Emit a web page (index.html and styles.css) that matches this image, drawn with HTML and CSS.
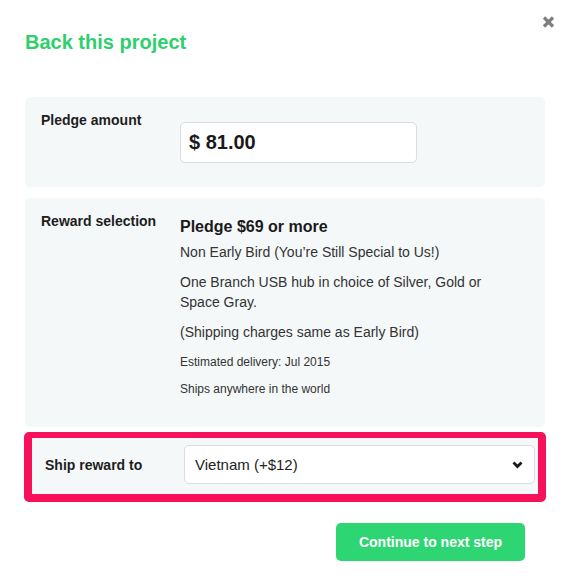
FILE: index.html
```html
<!DOCTYPE html>
<html lang="en">
<head>
<meta charset="utf-8">
<title>Back this project</title>
<link rel="stylesheet" href="styles.css">
</head>
<body>
<div class="modal">
  <button class="close" aria-label="Close">
    <svg width="13" height="12" viewBox="0 0 13 12"><path d="M2 1.5 L11 10.5 M11 1.5 L2 10.5" stroke="#7f7f7f" stroke-width="3.2" fill="none"/></svg>
  </button>
  <h1 class="title">Back this project</h1>

  <section class="panel panel-amount">
    <div class="label">Pledge amount</div>
    <div class="content">
      <div class="amount-input">$ 81.00</div>
    </div>
  </section>

  <section class="panel panel-reward">
    <div class="label">Reward selection</div>
    <div class="content">
      <h3 class="reward-title">Pledge $69 or more</h3>
      <p class="reward-text">Non Early Bird (You’re Still Special to Us!)</p>
      <p class="reward-text">One Branch USB hub in choice of Silver, Gold or Space Gray.</p>
      <p class="reward-text">(Shipping charges same as Early Bird)</p>
      <p class="reward-small">Estimated delivery: Jul 2015</p>
      <p class="reward-small">Ships anywhere in the world</p>
    </div>
  </section>

  <section class="panel panel-ship">
    <div class="label">Ship reward to</div>
    <div class="select">
      <span>Vietnam (+$12)</span>
      <svg width="11" height="8" viewBox="0 0 11 8"><path d="M1.5 1.5 L5.5 5.5 L9.5 1.5" stroke="#1a1a1a" stroke-width="2.8" fill="none"/></svg>
    </div>
  </section>

  <div class="actions">
    <button class="continue">Continue to next step</button>
  </div>
</div>
</body>
</html>
```

FILE: styles.css
```css
html, body {
  margin: 0;
  padding: 0;
  background: #ffffff;
}

body {
  font-family: "Liberation Sans", Arial, sans-serif;
  color: #222;
}

.modal {
  position: relative;
  padding: 30px 24px 0 25px;
}

.close {
  position: absolute;
  top: 16px;
  left: 542px;
  width: 13px;
  height: 12px;
  padding: 0;
  border: 0;
  background: none;
  display: block;
}

.close svg {
  display: block;
}

.title {
  margin: 0 0 43px 0;
  font-size: 20px;
  line-height: 24px;
  font-weight: bold;
  color: #2ecf6c;
}

.panel {
  background: #f5f8f9;
  border-radius: 5px;
  display: grid;
  grid-template-columns: 139px 1fr;
  padding: 13px 16px 17px 16px;
  margin-bottom: 11px;
}

.label {
  font-size: 14px;
  line-height: 20px;
  font-weight: bold;
  color: #1e1e1e;
}

.panel-amount {
  padding-bottom: 24px;
}

.amount-input {
  margin-top: 12px;
  width: 227px;
  height: 39px;
  box-sizing: content-box;
  border: 1px solid #d9dde0;
  border-radius: 5px;
  background: #fff;
  padding: 0 0 0 8px;
  display: flex;
  align-items: center;
  font-size: 20px;
  font-weight: bold;
  color: #1a1a1a;
}

.panel-reward {
  margin-bottom: 5px;
}

.panel-reward .content {
  padding-top: 5px;
}

.reward-title {
  margin: 0 0 4px 0;
  font-size: 16px;
  line-height: 22px;
  font-weight: bold;
  color: #1a1a1a;
}

.reward-text {
  margin: 0 0 10px 0;
  font-size: 14px;
  line-height: 20px;
  color: #333;
  max-width: 330px;
}

.reward-small {
  margin: 12px 0 10px 0;
  font-size: 12px;
  line-height: 17px;
  color: #333;
}

.reward-small + .reward-small {
  margin-top: 0;
}

.reward-small:last-child {
  margin-bottom: 12px;
}

.panel-ship {
  margin: 0 -1px 0 -1px;
  border: 8px solid #f7105a;
  border-top-width: 6px;
  border-radius: 5px;
  padding: 7px 3px 10px 13px;
  grid-template-columns: 139px 1fr;
  align-items: center;
}

.select {
  height: 37px;
  border: 1px solid #d9dde0;
  border-radius: 5px;
  background: #fff;
  display: flex;
  align-items: center;
  justify-content: space-between;
  padding: 0 11px 0 10px;
  font-size: 15px;
  color: #222;
}

.select svg {
  display: block;
}

.actions {
  display: flex;
  justify-content: flex-end;
  padding-right: 20px;
  margin-top: 21px;
}

.continue {
  width: 189px;
  height: 38px;
  border: 0;
  border-radius: 5px;
  background: #2ed573;
  color: #fff;
  font-family: "Liberation Sans", Arial, sans-serif;
  font-size: 14px;
  font-weight: bold;
  padding: 0;
}
```
